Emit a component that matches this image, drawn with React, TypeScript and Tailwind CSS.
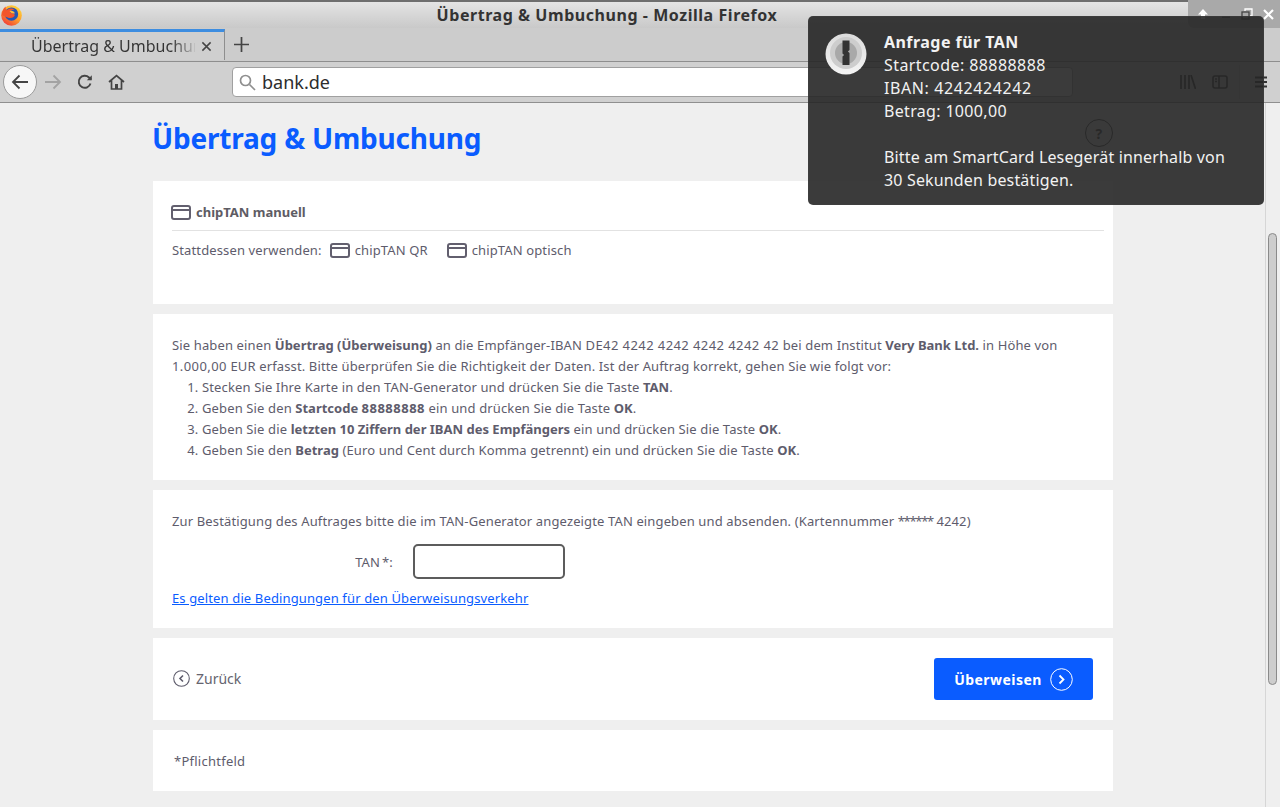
import React from "react";

const Card = () => (
  <svg width="20" height="15" viewBox="0 0 20 15" fill="none" stroke="#625f6e" strokeWidth="2" className="shrink-0">
    <rect x="1" y="1" width="18" height="13" rx="2" />
    <path d="M1 5h18" strokeWidth="2" />
  </svg>
);

const B = ({ children }: { children: React.ReactNode }) => <b className="tracking-normal">{children}</b>;

const Firefox = () => (
  <svg width="21" height="21" viewBox="0 0 22 22" className="shrink-0">
    <defs>
      <linearGradient id="ff" x1="0.850" y1="0" x2="0.150" y2="1">
        <stop offset="0" stopColor="#ffdc3c" />
        <stop offset="0.5" stopColor="#ff9a2a" />
        <stop offset="1" stopColor="#ee2f3a" />
      </linearGradient>
    </defs>
    <circle cx="11" cy="11" r="10.800" fill="url(#ff)" />
    <circle cx="11" cy="9.500" r="7" fill="#2456b4" />
    <path d="M1 10C1 6 3 3 5 1.500 4.500 3.500 5 4.500 6 5.500 8 3.500 12 3 14 5c-3 0-4.500 1-4.500 2.500 1 1.500 4.500 1 5 3-.5 2.500-4.500 4-7.500 2.500C5 12.500 2.500 12 1 10z" fill="#f2552c" />
    <path d="M9 6.500c2-1 5 0 5.500 2.500-2.500 0-4-.5-5.500-2.500z" fill="#ffb93a" />
  </svg>
);

const OnePassword = () => (
  <svg width="42" height="42" viewBox="0 0 42 42">
    <defs>
      <linearGradient id="op" x1="0" y1="0" x2="0" y2="1">
        <stop offset="0" stopColor="#dcdcdc" />
        <stop offset="1" stopColor="#f4f4f4" />
      </linearGradient>
    </defs>
    <circle cx="21" cy="21" r="20.500" fill="url(#op)" />
    <circle cx="21" cy="20" r="16" fill="#cdcdcd" />
    <circle cx="21" cy="20" r="11" fill="#a9a9a9" />
    <path d="M17.500 7.500h7v9.500l-1.600 1.500 1.600 1.500v12h-7V23.500l1.600-1.500-1.600-1.500z" fill="#333" />
  </svg>
);

export default function App() {
  const font = "font-['Noto_Sans',sans-serif]";
  return (
    <div className={`relative h-[807px] w-[1280px] overflow-hidden flex flex-col bg-[#efefef] ${font}`}>
      {/* title bar */}
      <header className="h-[28px] shrink-0 relative flex items-center justify-center border-t-2 border-[#6e6e6e] bg-gradient-to-b from-[#e4e4e4] to-[#c9c9c9]">
        <span className="absolute left-[1px] top-[3px]"><Firefox /></span>
        <span className="text-[16px] font-bold text-[#333] tracking-[0.55px] ml-[-66px]">Übertrag &amp; Umbuchung - Mozilla Firefox</span>
        <div className="absolute right-0 top-[-2px] h-[28px] w-[92px] rounded-bl-[6px] bg-[#a9a9a9] flex items-center pl-[9px]">
          <svg width="12" height="12" viewBox="0 0 12 12" fill="#fff"><path d="M6 1l5 5.500H8V11H4V6.500H1z" /></svg>
          <span className="ml-[13px] mt-[6px] h-[2px] w-[8px] bg-[#555]" />
          <svg width="12" height="12" viewBox="0 0 12 12" fill="none" stroke="#444" strokeWidth="1.300" className="ml-[11px]"><rect x="1" y="4" width="7" height="7" /><path d="M4 3V1h7v7H9" stroke="#fff" /></svg>
          <svg width="11" height="11" viewBox="0 0 11 11" stroke="#fff" strokeWidth="2.200" className="ml-[10px]"><path d="M1 1l9 9M10 1l-9 9" /></svg>
        </div>
      </header>

      {/* tabs */}
      <div className="h-[34px] shrink-0 flex items-start bg-[#cccccc] border-b border-[#8e8e8e]">
        <div className="mt-[1px] w-[225px] h-[31px] flex items-center border-t-[3px] border-r border-t-[#3d8de0] border-r-[#8e8e8e] bg-[#cfcfcf] pl-[31px] text-[#333]">
          <span className="w-[164px] overflow-hidden whitespace-nowrap text-[16px] bg-gradient-to-r from-[#333] from-85% to-[#bbb] bg-clip-text text-transparent">Übertrag &amp; Umbuchung</span>
          <svg width="11" height="11" viewBox="0 0 12 12" stroke="#444" strokeWidth="1.600" className="ml-[6px]"><path d="M1.500 1.500l9 9M10.500 1.500l-9 9" /></svg>
        </div>
        <svg width="15" height="15" viewBox="0 0 14 14" stroke="#444" strokeWidth="1.600" className="ml-[9px] mt-[9px]"><path d="M7 0v14M0 7h14" /></svg>
      </div>

      {/* nav bar */}
      <nav className="h-[41px] shrink-0 flex items-center bg-[#d0d0d0] border-b border-[#8f8f8f] pl-[3px]">
        <div className="w-[34px] h-[34px] rounded-full bg-[#f7f7f7] border border-[#9b9b9b] flex items-center justify-center">
          <svg width="18" height="16" viewBox="0 0 18 16" fill="none" stroke="#444" strokeWidth="1.800"><path d="M17 8H2M8.500 1.500L2 8l6.500 6.500" /></svg>
        </div>
        <svg width="18" height="16" viewBox="0 0 18 16" fill="none" stroke="#a3a3a3" strokeWidth="1.800" className="ml-[7px]"><path d="M1 8h15M9.500 1.500L16 8l-6.500 6.500" /></svg>
        <svg width="16" height="16" viewBox="0 0 16 16" fill="none" stroke="#444" strokeWidth="1.900" className="ml-[15px]"><path d="M13.500 9.500A6 6 0 1 1 12 3.500L14 5.500" /><path d="M14.800 1.200v5h-5z" fill="#444" stroke="none" /></svg>
        <svg width="17" height="16" viewBox="0 0 17 16" fill="none" stroke="#444" strokeWidth="1.700" className="ml-[15px]"><path d="M1 8l7.500-6.500L16 8M3.500 6.500V15h10V6.500" /><rect x="7" y="10" width="3" height="5" fill="#444" stroke="none" /></svg>
        <div className="ml-[107px] w-[841px] h-[30px] rounded-[4px] bg-white border border-[#a0a0a0] flex items-center pl-[6px] shrink-0">
          <svg width="17" height="17" viewBox="0 0 17 17" fill="none" stroke="#8f8f8f" strokeWidth="1.700"><circle cx="6.500" cy="6.500" r="5" /><path d="M10.500 10.500L16 16" /></svg>
          <span className="ml-[6px] text-[18px] text-[#2d2d2d]">bank.de</span>
        </div>
        <div className="flex-1 flex items-center pl-[107px]">
          <svg width="16" height="14" viewBox="0 0 16 14" stroke="#333" strokeWidth="1.700" className="shrink-0"><path d="M1 0v14M5 0v14M9 0v14M11 0l4.500 14" /></svg>
          <svg width="16" height="14" viewBox="0 0 16 14" fill="none" stroke="#333" strokeWidth="1.600" className="ml-[16px] shrink-0"><rect x="1" y="1" width="14" height="12" rx="2" /><path d="M7 1v12M3 4h2M3 6.500h2" /></svg>
          <span className="ml-[11px] h-[34px] w-[1px] bg-[#bdbdbd] shrink-0" />
          <svg width="12" height="12" viewBox="0 0 12 12" stroke="#333" strokeWidth="1.800" className="ml-[15px] shrink-0"><path d="M0 1.500h12M0 6h12M0 10.500h12" /></svg>
        </div>
      </nav>

      {/* page */}
      <div className="flex-1 flex min-h-0">
        <main className="w-[1265px] shrink-0 pl-[153px] text-[13px] leading-[21px] tracking-[0.13px] text-[#5e5c6c]">
          <div className="w-[960px]">
            <div className="h-[78px] flex items-center justify-between">
              <h1 className="text-[28px] leading-[36px] font-bold tracking-[-0.2px] text-[#0a5cff] mt-[-8px] ml-[-1px]">Übertrag &amp; Umbuchung</h1>
              <div className="w-[28px] h-[28px] rounded-full border border-[#444] flex items-center justify-center text-[#444] text-[14px] font-bold mt-[-18px]">?</div>
            </div>

            <section className="h-[123px] bg-white pt-[22px] pl-[18px] pr-[9px] mb-[10px]">
              <div className="flex items-center gap-[5px] font-bold tracking-normal text-[#5e5c64] h-[18px]"><Card /><span>chipTAN manuell</span></div>
              <div className="h-[1px] bg-[#e2e2e2] mt-[9px] ml-[1px]" />
              <div className="flex items-center mt-[9px] ml-[1px]">
                <span className="mr-[8px]">Stattdessen verwenden:</span>
                <Card /><span className="ml-[5px]">chipTAN QR</span>
                <span className="ml-[19px] flex items-center gap-[5px]"><Card /><span>chipTAN optisch</span></span>
              </div>
            </section>

            <section className="h-[166px] bg-white pt-[21px] pl-[19px] pr-[40px] mb-[10px]">
              <p>Sie haben einen <B>Übertrag (Überweisung)</B> an die Empfänger-IBAN <span className="tracking-[0.42px]">DE42 4242 4242 4242 4242 42</span> bei dem Institut <B>Very Bank Ltd.</B> in Höhe von <span className="tracking-[0.42px]">1.000,00</span> EUR erfasst. Bitte überprüfen Sie die Richtigkeit der Daten. Ist der Auftrag korrekt, gehen Sie wie folgt vor:</p>
              <ol className="list-decimal pl-[30px]">
                <li>Stecken Sie Ihre Karte in den TAN-Generator und drücken Sie die Taste <B>TAN</B>.</li>
                <li>Geben Sie den <b className="tracking-normal">Startcode <span className="tracking-[0.5px]">88888888</span></b> ein und drücken Sie die Taste <B>OK</B>.</li>
                <li>Geben Sie die <B>letzten 10 Ziffern der IBAN des Empfängers</B> ein und drücken Sie die Taste <B>OK</B>.</li>
                <li>Geben Sie den <B>Betrag</B> (Euro und Cent durch Komma getrennt) ein und drücken Sie die Taste <B>OK</B>.</li>
              </ol>
            </section>

            <section className="h-[138px] bg-white pt-[21px] pl-[19px] mb-[10px]">
              <p>Zur Bestätigung des Auftrages bitte die im TAN-Generator angezeigte TAN eingeben und absenden. (Kartennummer <span className="tracking-[-1.300px]">******</span> 4242)</p>
              <div className="flex items-center mt-[12px]">
                <label className="w-[221px] text-right mt-[2px]">TAN<span className="ml-[2px]">*:</span></label>
                <input aria-label="TAN" className="ml-[20px] w-[152px] h-[35px] rounded-[5px] border-2 border-[#5c5c5c] bg-white" />
              </div>
              <a className="block mt-[9px] text-[#0a5cff] underline" href="#">Es gelten die Bedingungen für den Überweisungsverkehr</a>
            </section>

            <section className="h-[82px] bg-white px-[20px] flex items-center justify-between mb-[10px]">
              <div className="flex items-center gap-[6px] text-[14px] tracking-normal text-[#66646f] mt-[-2px]">
                <svg width="17" height="17" viewBox="0 0 17 17" fill="none" stroke="#5e5c6c" strokeWidth="1.100"><circle cx="8.500" cy="8.500" r="7.800" /><path d="M10 5.500l-3 3 3 3" strokeWidth="1.600" /></svg>
                <span>Zurück</span>
              </div>
              <button className="w-[159px] h-[42px] rounded-[3px] bg-[#0a5cff] text-white font-bold text-[14px] tracking-[0.45px] flex items-center justify-center gap-[8px]">
                <span>Überweisen</span>
                <svg width="23" height="23" viewBox="0 0 23 23" fill="none" stroke="#fff" strokeWidth="1"><circle cx="11.500" cy="11.500" r="10.800" /><path d="M9.500 7.500l4 4-4 4" strokeWidth="1.800" /></svg>
              </button>
            </section>

            <section className="h-[61px] bg-white pl-[21px] pt-[2px] tracking-[0.25px] flex items-center">*Pflichtfeld</section>
          </div>
        </main>
        <aside className="flex-1 bg-[#efefef] border-l border-[#d6d6d6] pl-[2px] pt-[130px]">
          <div className="w-[9px] h-[452px] rounded-[5px] bg-[#cdcdcd] border border-[#8a8a8a]" />
        </aside>
      </div>

      {/* notification */}
      <div className="absolute left-[808px] top-[16px] w-[456px] h-[189px] rounded-[5px] bg-[#262626]/90 border border-[#444]/40 flex text-[16px] leading-[23px] text-[#f2f2f2] pl-[16px] pt-[14px]">
        <div className="mr-[17px] mt-[2px]"><OnePassword /></div>
        <div className="w-[350px] tracking-[0.16px]">
          <div className="font-bold tracking-[0.45px]">Anfrage für TAN</div>
          <div className="tracking-[0.42px]">Startcode: 88888888</div>
          <div className="tracking-[0.6px]">IBAN: 4242424242</div>
          <div className="tracking-[0.33px]">Betrag: 1000,00</div>
          <div className="h-[23px]" />
          <div>Bitte am SmartCard Lesegerät innerhalb von</div>
          <div>30 Sekunden bestätigen.</div>
        </div>
      </div>
    </div>
  );
}
